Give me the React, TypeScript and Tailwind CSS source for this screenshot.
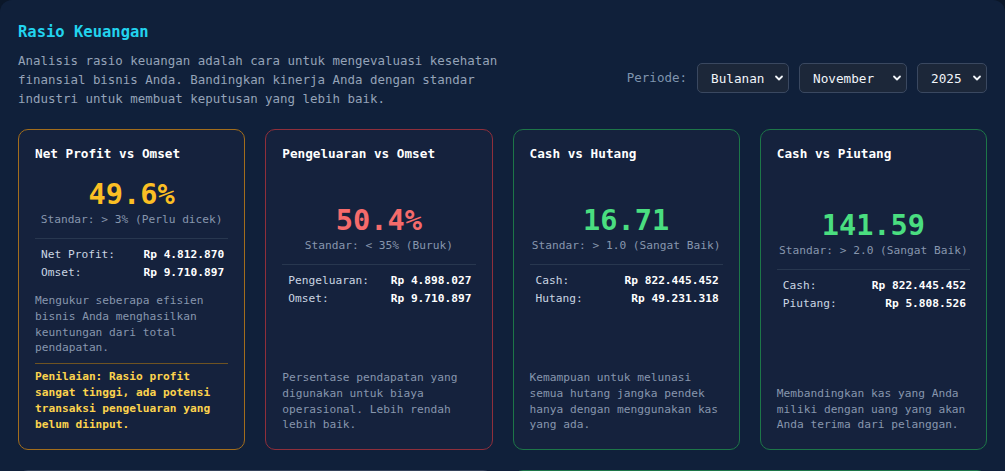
import React from 'react';

type Row = { label: string; value: string };

type Ratio = {
  title: string;
  value: string;
  valueColor: string;
  border: string;
  standard: string;
  rows: Row[];
  desc: string;
  note?: string;
};

const ratios: Ratio[] = [
  {
    title: 'Net Profit vs Omset',
    value: '49.6%',
    valueColor: 'text-[#fbbf24]',
    border: 'border-[#a26d1c]',
    standard: 'Standar: > 3% (Perlu dicek)',
    rows: [
      { label: 'Net Profit:', value: 'Rp 4.812.870' },
      { label: 'Omset:', value: 'Rp 9.710.897' },
    ],
    desc: 'Mengukur seberapa efisien bisnis Anda menghasilkan keuntungan dari total pendapatan.',
    note: 'Penilaian: Rasio profit sangat tinggi, ada potensi transaksi pengeluaran yang belum diinput.',
  },
  {
    title: 'Pengeluaran vs Omset',
    value: '50.4%',
    valueColor: 'text-[#f56b6b]',
    border: 'border-[#8f2f3b]',
    standard: 'Standar: < 35% (Buruk)',
    rows: [
      { label: 'Pengeluaran:', value: 'Rp 4.898.027' },
      { label: 'Omset:', value: 'Rp 9.710.897' },
    ],
    desc: 'Persentase pendapatan yang digunakan untuk biaya operasional. Lebih rendah lebih baik.',
  },
  {
    title: 'Cash vs Hutang',
    value: '16.71',
    valueColor: 'text-[#4ade80]',
    border: 'border-[#1d7648]',
    standard: 'Standar: > 1.0 (Sangat Baik)',
    rows: [
      { label: 'Cash:', value: 'Rp 822.445.452' },
      { label: 'Hutang:', value: 'Rp 49.231.318' },
    ],
    desc: 'Kemampuan untuk melunasi semua hutang jangka pendek hanya dengan menggunakan kas yang ada.',
  },
  {
    title: 'Cash vs Piutang',
    value: '141.59',
    valueColor: 'text-[#4ade80]',
    border: 'border-[#1d7648]',
    standard: 'Standar: > 2.0 (Sangat Baik)',
    rows: [
      { label: 'Cash:', value: 'Rp 822.445.452' },
      { label: 'Piutang:', value: 'Rp 5.808.526' },
    ],
    desc: 'Membandingkan kas yang Anda miliki dengan uang yang akan Anda terima dari pelanggan.',
  },
];

const Chevron = () => (
  <svg width="10" height="10" viewBox="0 0 10 10" fill="none" className="text-slate-100">
    <path d="M2 3.5 L5 6.5 L8 3.5" stroke="currentColor" strokeWidth="1.8" strokeLinecap="round" strokeLinejoin="round" />
  </svg>
);

const FakeSelect: React.FC<{ label: string; width: string }> = ({ label, width }) => (
  <div
    className={`${width} flex h-[30px] items-center justify-between rounded-[5px] border border-[#3a4860] bg-[#1c2739] pl-[13px] pr-[4px] text-[12.7px] font-medium text-slate-100`}
  >
    <span>{label}</span>
    <Chevron />
  </div>
);

const RatioCard: React.FC<{ r: Ratio }> = ({ r }) => (
  <div className={`flex flex-col rounded-[10px] border ${r.border} bg-[#15223d] p-4`}>
    <h3 className="mb-[14px] text-[12.7px] font-bold leading-[16px] text-white">{r.title}</h3>

    <div className="my-auto text-center">
      <div className={`text-[28.6px] font-bold leading-[36px] ${r.valueColor}`}>{r.value}</div>
      <div className="text-[11.2px] leading-[16px] text-[#8796ad]">{r.standard}</div>
      <div className="mt-[10px] border-t border-[#28374f] pt-[7px]">
        {r.rows.map((row) => (
          <div key={row.label} className="flex justify-between pl-[6px] pr-[4px] text-[11.2px] leading-[18px]">
            <span className="text-slate-300">{row.label}</span>
            <span className="font-bold text-white">{row.value}</span>
          </div>
        ))}
      </div>
    </div>

    <div className="mt-auto pt-[11px] text-[11.2px]">
      <p className="leading-[15.7px] text-[#8796ad]">{r.desc}</p>
      {r.note && (
        <p className="mt-[7px] border-t border-[#6e5322] pt-[5px] font-bold leading-[16px] text-[#fcd34d]">{r.note}</p>
      )}
    </div>
  </div>
);

export default function App() {
  return (
    <div className="min-h-screen bg-[#0b1729] font-['DejaVu_Sans_Mono',monospace]">
      <div className="rounded-xl bg-[#10203a] px-[18px] pt-[22px] pb-10">
        <h1 className="text-[15.5px] font-bold leading-[20px] text-[#22d3ee]">Rasio Keuangan</h1>

        <div className="mt-[10px] flex items-center justify-between">
          <p className="max-w-[515px] text-[12.45px] leading-[18.75px] text-[#95a3b8]">
            Analisis rasio keuangan adalah cara untuk mengevaluasi kesehatan finansial bisnis Anda. Bandingkan kinerja
            Anda dengan standar industri untuk membuat keputusan yang lebih baik.
          </p>
          <div className="mb-[4px] flex items-center gap-[10px]">
            <span className="text-[12.5px] text-[#7f94ae]">Periode:</span>
            <FakeSelect label="Bulanan" width="w-[92px]" />
            <FakeSelect label="November" width="w-[108px]" />
            <FakeSelect label="2025" width="w-[70px]" />
          </div>
        </div>

        <div className="mt-[21px] grid grid-cols-4 gap-[20px]">
          {ratios.map((r) => (
            <RatioCard key={r.title} r={r} />
          ))}
        </div>

        <div className="mt-[20px] grid grid-cols-2 gap-[20px]">
          <div className="h-[200px] rounded-[10px] border border-[#34425a] bg-[#15223d]" />
          <div className="h-[200px] rounded-[10px] border border-[#1d7648] bg-[#15223d]" />
        </div>
      </div>
    </div>
  );
}
